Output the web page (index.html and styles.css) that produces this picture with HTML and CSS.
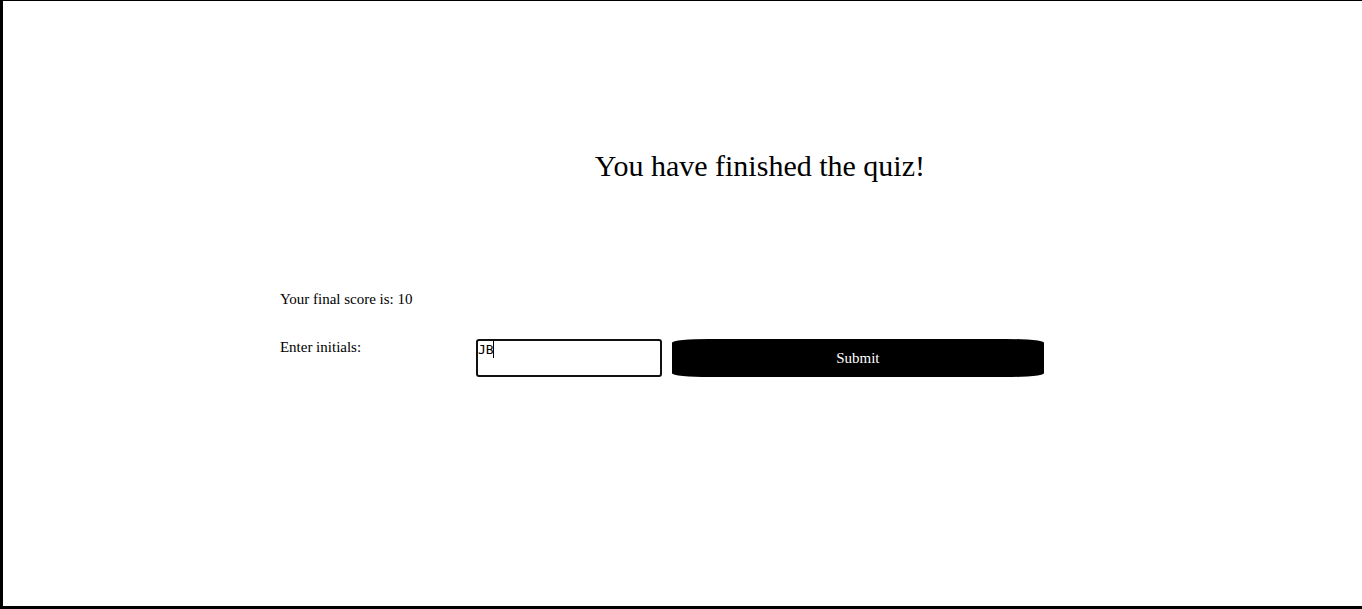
FILE: index.html
```html
<!DOCTYPE html>
<html lang="en">
<head>
<meta charset="utf-8">
<meta name="viewport" content="width=device-width, initial-scale=1">
<title>Quiz results</title>
<link rel="stylesheet" href="styles.css">
</head>
<body>
<main class="page">
  <form class="results">
    <h1 class="title">You have finished the quiz!</h1>
    <p class="score">Your final score is: 10</p>
    <label class="label" for="initials">Enter initials:</label>
    <div class="field">
      <textarea class="initials" id="initials" spellcheck="false">JB</textarea>
      <span class="caret"></span>
    </div>
    <button class="submit" type="button">Submit</button>
  </form>
</main>
</body>
</html>
```

FILE: styles.css
```css
* {
  box-sizing: border-box;
}

body {
  margin: 0;
  background: #fff;
  color: #000;
  font: 15px/17px "Liberation Serif", "Times New Roman", serif;
}

.page {
  min-height: 100vh;
  padding: 147px 0 40px 20.33%;
  border: solid #000;
  border-width: 1px 0 3px 3px;
}

.results {
  display: grid;
  grid-template-columns: 1fr 1fr 2fr;
  column-gap: 10px;
  width: 70.6%;
}

.title {
  grid-column: 2 / 4;
  margin: 0 0 107px;
  font-size: 30px;
  font-weight: 400;
  line-height: 36px;
  text-align: center;
}

.score {
  grid-column: 1 / 4;
  margin: 0 0 31px;
}

.field {
  position: relative;
  display: flex;
}

.initials {
  width: 100%;
  height: 38px;
  padding: 0;
  border: 2px solid #101010;
  border-radius: 3px;
  outline: none;
  resize: none;
  overflow: hidden;
  background: #fff;
  color: #000;
  font: 13px/17px "DejaVu Sans Mono", monospace;
}

.caret {
  position: absolute;
  top: 2px;
  left: 17px;
  width: 1px;
  height: 17px;
  background: #000;
}

.label {
  align-self: start;
}

.submit {
  height: 38px;
  padding: 0;
  border: 0;
  border-radius: 10%;
  background: #000;
  color: #fff;
  font: inherit;
  cursor: pointer;
}
```
